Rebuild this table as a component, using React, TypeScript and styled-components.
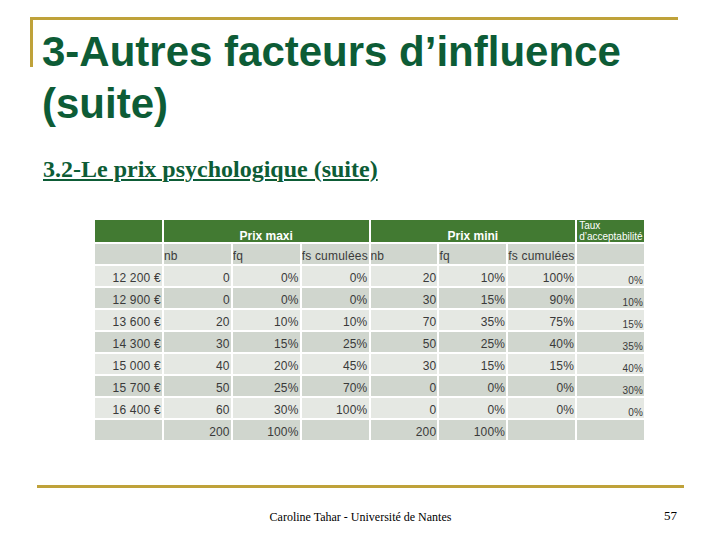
import React from "react";
import styled, { createGlobalStyle } from "styled-components";

const GOLD = "#bfa23a";
const GREEN_TEXT = "#0d5c36";

const Global = createGlobalStyle`
  html, body { margin: 0; padding: 0; background: #ffffff; }
  #root { width: 720px; height: 540px; }
`;

const Slide = styled.div`
  width: 720px;
  height: 540px;
  display: flex;
  flex-direction: column;
  background: #ffffff;
  overflow: hidden;
`;

const TitleBlock = styled.header`
  margin: 17px 0 0 30px;
  width: 648px;
  border-top: 3px solid ${GOLD};
  display: flex;
  align-items: flex-start;
`;

const TitleRule = styled.div`
  width: 3px;
  height: 47px;
  background: ${GOLD};
  flex-shrink: 0;
`;

const Title = styled.h1`
  margin: 0 0 0 9px;
  padding-top: 6px;
  font-family: "Liberation Sans", Arial, sans-serif;
  font-weight: bold;
  font-size: 42px;
  line-height: 52px;
  color: ${GREEN_TEXT};
`;

const Subtitle = styled.h2`
  margin: 25px 0 0 43px;
  font-family: "Liberation Serif", "Times New Roman", serif;
  font-weight: bold;
  font-size: 24px;
  line-height: 28px;
  color: ${GREEN_TEXT};
  text-decoration: underline;
  text-decoration-thickness: 2px;
  text-underline-offset: 2px;
`;

const Table = styled.div`
  margin: 37px 0 0 95px;
  width: 549px;
  display: grid;
  grid-template-columns: repeat(8, 1fr);
  grid-template-rows: 22px repeat(9, 20px);
  gap: 2px;
  font-family: "Liberation Sans", Tahoma, sans-serif;
  font-size: 12px;
  color: #3a3a3a;
`;

type Tone = "head" | "dark" | "light";

const Cell = styled.div<{ $tone: Tone; $align?: "left" | "right" | "center"; $span?: number; $small?: boolean }>`
  grid-column: span ${(p) => p.$span ?? 1};
  background: ${(p) => (p.$tone === "head" ? "#427a32" : p.$tone === "dark" ? "#d0d6ce" : "#e5e8e3")};
  display: flex;
  align-items: flex-end;
  justify-content: ${(p) => (p.$align === "left" ? "flex-start" : p.$align === "center" ? "center" : "flex-end")};
  padding: 0 ${(p) => (p.$align === "right" ? "1px" : "0")} ${(p) => (p.$small || p.$tone === "head" ? "0" : "1px")} 0;
  font-size: ${(p) => (p.$small ? "10px" : "12px")};
  line-height: ${(p) => (p.$small ? "10px" : p.$tone === "head" ? "12px" : "14px")};
  letter-spacing: 0.2px;
  white-space: nowrap;
  overflow: hidden;
  box-sizing: border-box;
`;

const GroupLabel = styled.span`
  color: #ffffff;
  font-weight: bold;
  font-size: 12px;
  letter-spacing: 0;
`;

const TauxLabel = styled.div`
  grid-column: span 1;
  background: #427a32;
  color: #ffffff;
  font-size: 10px;
  line-height: 11px;
  padding: 0 0 0 2px;
  overflow: hidden;
  white-space: nowrap;
`;

const BottomRule = styled.div`
  margin: 45px 0 0 37px;
  width: 647px;
  height: 3px;
  background: ${GOLD};
`;

const Footer = styled.footer`
  margin: 21px 0 0 37px;
  width: 647px;
  display: grid;
  grid-template-columns: 1fr auto 1fr;
  align-items: center;
  font-family: "Liberation Serif", "Times New Roman", serif;
  color: #000000;
`;

const FooterText = styled.span`
  grid-column: 2;
  font-size: 12px;
  line-height: 16px;
`;

const PageNum = styled.span`
  grid-column: 3;
  justify-self: end;
  margin-right: 7px;
  margin-top: -3px;
  font-size: 13px;
  line-height: 16px;
`;

const rows: string[][] = [
  ["12 200 €", "0", "0%", "0%", "20", "10%", "100%", "0%"],
  ["12 900 €", "0", "0%", "0%", "30", "15%", "90%", "10%"],
  ["13 600 €", "20", "10%", "10%", "70", "35%", "75%", "15%"],
  ["14 300 €", "30", "15%", "25%", "50", "25%", "40%", "35%"],
  ["15 000 €", "40", "20%", "45%", "30", "15%", "15%", "40%"],
  ["15 700 €", "50", "25%", "70%", "0", "0%", "0%", "30%"],
  ["16 400 €", "60", "30%", "100%", "0", "0%", "0%", "0%"],
];

const totals = ["", "200", "100%", "", "200", "100%", "", ""];
const subHeads = ["", "nb", "fq", "fs cumulées", "nb", "fq", "fs cumulées", ""];

export default function App() {
  return (
    <>
      <Global />
      <Slide>
        <TitleBlock>
          <TitleRule />
          <Title>
            3-Autres facteurs d’influence
            <br />
            (suite)
          </Title>
        </TitleBlock>
        <Subtitle>3.2-Le prix psychologique (suite)</Subtitle>
        <Table>
          <Cell $tone="head" />
          <Cell $tone="head" $span={3} $align="center">
            <GroupLabel>Prix maxi</GroupLabel>
          </Cell>
          <Cell $tone="head" $span={3} $align="center">
            <GroupLabel>Prix mini</GroupLabel>
          </Cell>
          <TauxLabel>
            Taux
            <br />
            d’acceptabilité
          </TauxLabel>
          {subHeads.map((h, i) => (
            <Cell key={"h" + i} $tone="dark" $align="left">
              {h}
            </Cell>
          ))}
          {rows.map((r, ri) =>
            r.map((v, ci) => (
              <Cell key={ri + "-" + ci} $tone={ri % 2 === 0 ? "light" : "dark"} $align="right" $small={ci === 7}>
                {v}
              </Cell>
            ))
          )}
          {totals.map((v, ci) => (
            <Cell key={"t" + ci} $tone="dark" $align="right">
              {v}
            </Cell>
          ))}
        </Table>
        <BottomRule />
        <Footer>
          <FooterText>Caroline Tahar - Université de Nantes</FooterText>
          <PageNum>57</PageNum>
        </Footer>
      </Slide>
    </>
  );
}
